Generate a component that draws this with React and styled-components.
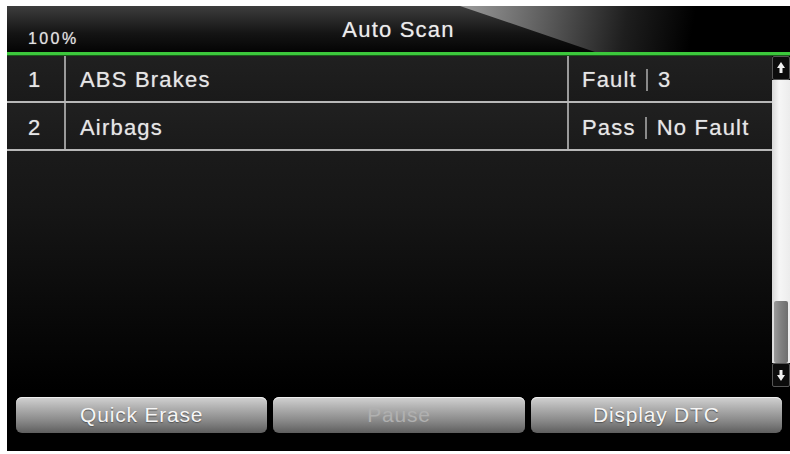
import React from "react";
import styled, { createGlobalStyle } from "styled-components";

const Global = createGlobalStyle`
  body {
    margin: 0;
    background: #fff;
    font-family: "Liberation Sans", Arial, sans-serif;
  }
`;

const Screen = styled.div`
  margin: 6px 0 0 7px;
  width: 783px;
  height: 445px;
  background: #000;
  display: flex;
  flex-direction: column;
  overflow: hidden;
`;

const Header = styled.div`
  position: relative;
  height: 46px;
  display: grid;
  grid-template-columns: 1fr auto 1fr;
  background: linear-gradient(#3d3d3d, #141414 60%, #040404);
  border-bottom: 3px solid #3cc83c;
  box-shadow: 0 1px 0 #1a5a1a;

  &::before {
    content: "";
    position: absolute;
    top: 0;
    bottom: 0;
    left: 453px;
    right: 0;
    clip-path: polygon(0 0, 100% 0, 100% 100%, 135px 100%);
    background: linear-gradient(100deg, #9c9c9c 0%, #666 22%, #1e1e1e 50%, #000 70%);
  }
`;

const Percent = styled.div`
  position: relative;
  z-index: 1;
  align-self: end;
  padding: 0 0 4px 21px;
  font-size: 16px;
  letter-spacing: 2.4px;
  color: #e2e2e2;
  text-shadow: 0 0 1px rgba(255, 255, 255, 0.5);
`;

const Title = styled.div`
  position: relative;
  z-index: 1;
  align-self: start;
  margin-top: 11px;
  font-size: 22px;
  letter-spacing: 1.2px;
  color: #ececec;
  text-shadow: 0 0 1px rgba(255, 255, 255, 0.5);
`;

const Main = styled.div`
  height: 335px;
  display: flex;
`;

const Table = styled.div`
  flex: 1;
  background: linear-gradient(#232323, #161616 45%, #000 100%);
`;

const Row = styled.div`
  display: grid;
  grid-template-columns: 57px 1fr 205px;
  height: 46px;
  border-bottom: 2px solid #b8b8b8;
  background: linear-gradient(#202020, #1a1a1a);
`;

const Cell = styled.div`
  display: flex;
  align-items: center;
  padding: 3px 0 0 ${({ $pad }) => $pad}px;
  border-left: ${({ $first }) => ($first ? "none" : "2px solid #9a9a9a")};
  font-size: 22px;
  letter-spacing: 1.2px;
  color: #e6e6e6;
  text-shadow: 0 0 1px rgba(255, 255, 255, 0.5);
  white-space: nowrap;
`;

const Divider = styled.span`
  display: inline-block;
  width: 2px;
  height: 22px;
  margin: 0 10px 0 9px;
  background: #8a8a8a;
`;

const Scroll = styled.div`
  width: 18px;
  margin: 1px 0 3px;
  display: flex;
  flex-direction: column;
`;

const Arrow = styled.div`
  height: 22px;
  background: #0c0c0c;
  border: 1px solid #555;
  border-radius: 2px;
  display: flex;
  align-items: center;
  justify-content: center;
`;

const Track = styled.div`
  flex: 1;
  display: flex;
  flex-direction: column;
  justify-content: flex-end;
  background: linear-gradient(90deg, #d8d8d8, #f6f6f6 40%, #ececec);
`;

const Thumb = styled.div`
  height: 62px;
  margin: 0 2px;
  background: linear-gradient(90deg, #9a9a9a, #808080 50%, #6e6e6e);
  border-radius: 2px;
`;

const Buttons = styled.div`
  flex: 1;
  display: flex;
  gap: 6px;
  padding: 7px 8px 18px 9px;
`;

const Button = styled.div`
  flex: 1;
  height: 36px;
  border-radius: 6px;
  display: flex;
  align-items: center;
  justify-content: center;
  background: linear-gradient(#d2d2d2, #b0b0b0 30%, #848484 70%, #5e5e5e);
  box-shadow: inset 0 1px 0 #eee;
  font-size: 21px;
  letter-spacing: 0.8px;
  color: ${({ $disabled }) => ($disabled ? "#b0b0b0" : "#f6f6f6")};
  text-shadow: ${({ $disabled }) => ($disabled ? "none" : "0 1px 1px #555")};
`;

const ArrowIcon = ({ down }) => (
  <svg width="10" height="14" viewBox="0 0 10 14" style={{ transform: down ? "rotate(180deg)" : "none" }}>
    <path d="M5 1 L9 7 L6.5 7 L6.5 12 L3.5 12 L3.5 7 L1 7 Z" fill="#f0f0f0" strokeLinejoin="round" />
  </svg>
);

const rows = [
  { n: 1, name: "ABS Brakes", status: "Fault", detail: "3" },
  { n: 2, name: "Airbags", status: "Pass", detail: "No Fault" },
];

export default function App() {
  return (
    <>
      <Global />
      <Screen>
        <Header>
          <Percent>100%</Percent>
          <Title>Auto Scan</Title>
          <div />
        </Header>
        <Main>
          <Table>
            {rows.map((r) => (
              <Row key={r.n}>
                <Cell $first $pad={21}>{r.n}</Cell>
                <Cell $pad={14}>{r.name}</Cell>
                <Cell $pad={13}>
                  {r.status}
                  <Divider />
                  {r.detail}
                </Cell>
              </Row>
            ))}
          </Table>
          <Scroll>
            <Arrow>
              <ArrowIcon />
            </Arrow>
            <Track>
              <Thumb />
            </Track>
            <Arrow>
              <ArrowIcon down />
            </Arrow>
          </Scroll>
        </Main>
        <Buttons>
          <Button>Quick Erase</Button>
          <Button $disabled>Pause</Button>
          <Button>Display DTC</Button>
        </Buttons>
      </Screen>
    </>
  );
}
